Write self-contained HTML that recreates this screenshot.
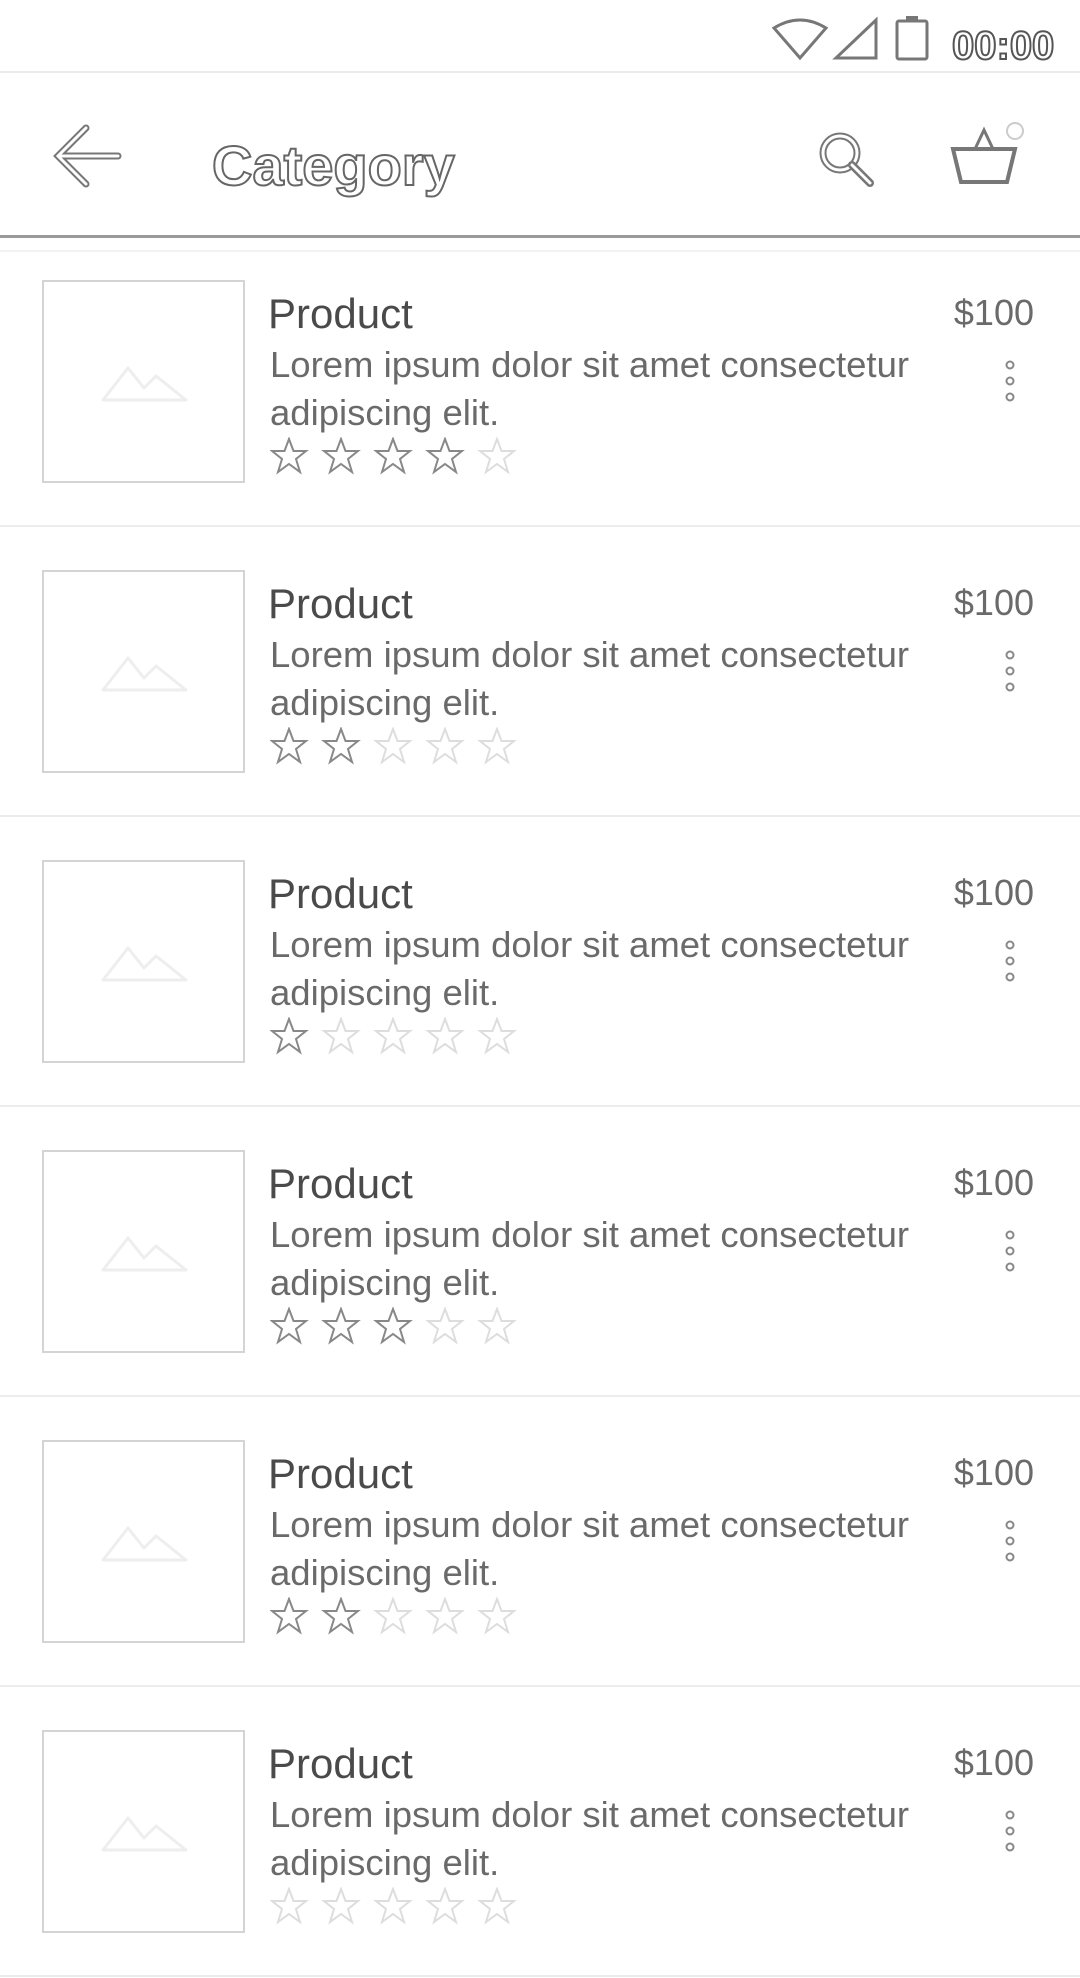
<!DOCTYPE html>
<html><head><meta charset="utf-8"><style>
body{margin:0;width:1080px;height:1978px;background:#fff;font-family:"Liberation Sans",sans-serif;position:relative;overflow:hidden}
.a{position:absolute}
.sep{position:absolute;left:0;width:1080px;height:2px;background:#ececec}
.box{position:absolute;left:42px;width:199px;height:199px;border:2px solid #d4d4d4}
.t{position:absolute;left:268px;font-size:42px;color:#4a4a4a}
.d{position:absolute;left:270px;font-size:36.5px;color:#6a6a6a;line-height:48px;width:720px;white-space:nowrap}
.p{position:absolute;right:46px;font-size:36px;color:#6a6a6a}
.st{position:absolute;left:270px}
</style></head><body>
<div class="sep" style="top:71px"></div>
<svg class="a" style="left:770px;top:14px" width="310" height="50" viewBox="0 0 310 50">
<path d="M4 14 Q30 -2 56 14 L30 44 Z" fill="none" stroke="#777" stroke-width="3"/>
<path d="M106 6 L106 44 L66 44 Z" fill="none" stroke="#777" stroke-width="3"/>
<rect x="127" y="7" width="30" height="38" fill="none" stroke="#777" stroke-width="3" rx="2"/>
<rect x="136" y="2" width="12" height="6" fill="#777"/>
<text x="182" y="45" font-size="40" font-family="Liberation Sans" font-weight="bold" fill="#fff" stroke="#555" stroke-width="2">00:00</text>
</svg>
<svg class="a" style="left:50px;top:120px" width="80" height="75" viewBox="0 0 80 75">
<path d="M68 36 L10 36 M36 8 L8 36 L36 64" fill="none" stroke="#777" stroke-width="7" stroke-linecap="round"/>
<path d="M68 36 L10 36 M36 8 L8 36 L36 64" fill="none" stroke="#fff" stroke-width="3" stroke-linecap="round"/>
</svg>
<div class="a" style="left:212px;top:133px;font-size:56px;font-weight:bold;color:#fff;-webkit-text-stroke:2px #666">Category</div>
<svg class="a" style="left:812px;top:125px" width="70" height="70" viewBox="0 0 70 70">
<circle cx="28" cy="28" r="17" fill="none" stroke="#777" stroke-width="7"/><circle cx="28" cy="28" r="17" fill="none" stroke="#fff" stroke-width="3"/>
<path d="M40 40 L58 58" stroke="#777" stroke-width="8" stroke-linecap="round"/><path d="M40 40 L58 58" stroke="#fff" stroke-width="3" stroke-linecap="round"/>
</svg>
<svg class="a" style="left:945px;top:115px" width="80" height="80" viewBox="0 0 80 80">
<path d="M8 34 L70 34 L62 67 L16 67 Z" fill="none" stroke="#777" stroke-width="4"/>
<path d="M30 34 L39 15 L48 34" fill="none" stroke="#777" stroke-width="3"/>
<circle cx="70" cy="16" r="8" fill="none" stroke="#ccc" stroke-width="2"/>
</svg>
<div class="a" style="left:0;top:235px;width:1080px;height:3px;background:#9a9a9a"></div>
<div class="sep" style="top:250px;background:#f3f3f3"></div>
<div id="rows"></div>
<script>
var r=[4,2,1,3,2,0],h='';
function star(x,on){return '<path transform="translate('+x+',0)" d="M19 2 L23.5 14 L36 14 L26 22 L30 35 L19 27 L8 35 L12 22 L2 14 L14.5 14 Z" fill="none" stroke="'+(on?'#888':'#ddd')+'" stroke-width="2"/>';}
for(var i=0;i<6;i++){var y=280+290*i;
h+='<div class="box" style="top:'+y+'px"></div>';
h+='<svg class="a" style="left:100px;top:'+(y+78)+'px" width="90" height="46"><path d="M3 42 L28 10 L44 30 L56 18 L86 42 Z" fill="none" stroke="#eee" stroke-width="3" stroke-linejoin="round"/></svg>';
h+='<div class="t" style="top:'+(y+10)+'px">Product</div>';
h+='<div class="d" style="top:'+(y+61)+'px">Lorem ipsum dolor sit amet consectetur<br>adipiscing elit.</div>';
h+='<div class="p" style="top:'+(y+12)+'px">$100</div>';
h+='<svg class="a" style="left:1000px;top:'+(y+80)+'px" width="20" height="46"><circle cx="10" cy="5" r="3.5" fill="none" stroke="#888" stroke-width="2"/><circle cx="10" cy="21" r="3.5" fill="none" stroke="#888" stroke-width="2"/><circle cx="10" cy="37" r="3.5" fill="none" stroke="#888" stroke-width="2"/></svg>';
var s='';for(var k=0;k<5;k++)s+=star(k*52,k<r[i]);
h+='<svg class="st" style="top:'+(y+157)+'px" width="270" height="40">'+s+'</svg>';
h+='<div class="sep" style="top:'+(y+245)+'px"></div>';}
document.getElementById('rows').innerHTML=h;
</script>
</body></html>
